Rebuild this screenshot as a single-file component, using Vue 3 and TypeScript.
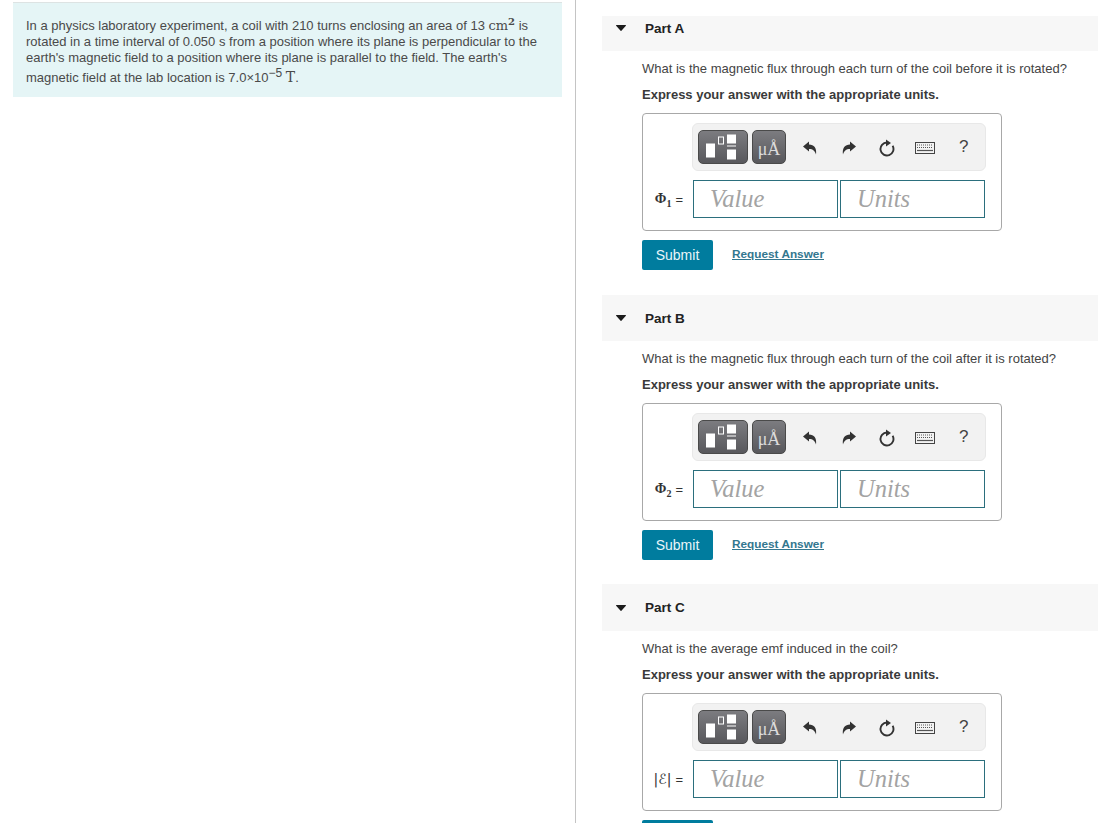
<template>
  <div class="page">
    <aside class="left">
      <div class="intro">
        In a physics laboratory experiment, a coil with 210 turns enclosing an area of 13
        <span class="math">cm<sup>2</sup></span> is rotated in a time interval of 0.050 s from a position where its plane is
        perpendicular to the earth's magnetic field to a position where its plane is parallel to the field. The earth's
        magnetic field at the lab location is 7.0×10<sup class="exp">−5</sup> <span class="math big">T</span>.
      </div>
    </aside>

    <main class="right">
      <section v-for="part in parts" :key="part.name" class="part">
        <header class="part-head">
          <svg class="caret" width="10" height="6" viewBox="0 0 10 6"><path d="M0.500 0h9a.5.5 0 0 1 .4.800L5.400 5.800a.5.5 0 0 1-.8 0L.1.800A.5.5 0 0 1 .5 0z" fill="#1c1c1c" /></svg>
          <span>{{ part.name }}</span>
        </header>
        <div class="part-body">
          <p class="question">{{ part.question }}</p>
          <p class="express">Express your answer with the appropriate units.</p>

          <div class="answer-box">
            <div class="toolbar">
              <button class="tool tool-wide" type="button" aria-label="Templates">
                <svg width="40" height="28" viewBox="0 0 40 28">
                  <rect x="3" y="10.500" width="9" height="14" fill="#fff" />
                  <rect x="15.500" y="4" width="5" height="7" fill="none" stroke="#fff" stroke-width="1" />
                  <rect x="24" y="1.500" width="9" height="9" fill="#fff" />
                  <rect x="24" y="12.500" width="9" height="1" fill="#fff" />
                  <rect x="24" y="16.500" width="9" height="10" fill="#fff" />
                </svg>
              </button>
              <button class="tool tool-unit" type="button">μÅ</button>
              <span class="icon-slot undo">
                <svg width="16" height="16" viewBox="0 0 16 16"><path d="M1 6.500 7 1.500v3c5 0 8 3.500 7 10-1-3.500-3-5.500-7-5.500v2.500z" fill="#333" /></svg>
              </span>
              <span class="icon-slot">
                <svg width="16" height="16" viewBox="0 0 16 16"><path d="M15 6.500 9 1.500v3c-5 0-8 3.500-7 10 1-3.500 3-5.500 7-5.500v2.500z" fill="#333" /></svg>
              </span>
              <span class="icon-slot">
                <svg width="18" height="18" viewBox="0 0 18 18">
                  <path d="M14.600 6.750A6.500 6.500 0 1 1 9 3.500" fill="none" stroke="#333" stroke-width="1.900" />
                  <path d="M8 0.500 13 4 8 7.500z" fill="#333" />
                </svg>
              </span>
              <span class="icon-slot">
                <svg width="20" height="12" viewBox="0 0 20 12">
                  <rect x="0.500" y="0.500" width="19" height="11" fill="#f4f4f4" stroke="#444" />
                  <path d="M2 3h16M2 5.500h16" stroke="#555" stroke-width="1.200" stroke-dasharray="1 1" />
                  <path d="M2 8.500h16" stroke="#555" stroke-width="1.200" />
                </svg>
              </span>
              <span class="icon-slot help">?</span>
            </div>

            <div class="inputs">
              <label class="symbol">
                <b v-if="part.index" class="phi">Φ<sub>{{ part.index }}</sub></b>
                <span v-else class="bars">|<i class="emf">ℰ</i>|</span>
                <span class="eq">=</span>
              </label>
              <input class="field" placeholder="Value" type="text" />
              <input class="field" placeholder="Units" type="text" />
            </div>
          </div>

          <div class="actions">
            <button class="submit" type="button">Submit</button>
            <a class="request" href="#">Request Answer</a>
          </div>
        </div>
      </section>
    </main>
  </div>
</template>

<script setup lang="ts">
interface Part {
  name: string
  question: string
  index: number
}

const parts: Part[] = [
  { name: 'Part A', question: 'What is the magnetic flux through each turn of the coil before it is rotated?', index: 1 },
  { name: 'Part B', question: 'What is the magnetic flux through each turn of the coil after it is rotated?', index: 2 },
  { name: 'Part C', question: 'What is the average emf induced in the coil?', index: 0 }
]
</script>

<style scoped>
.page {
  display: flex;
  height: 823px;
  overflow: hidden;
  font-family: "Liberation Sans", Arial, sans-serif;
  font-size: 13px;
  color: #333;
  background: #fff;
}

.left {
  width: 576px;
  flex: none;
  box-sizing: border-box;
  border-right: 1px solid #c4c4c4;
  padding: 2px 13px 0;
}

.intro {
  width: 549px;
  height: 95px;
  box-sizing: border-box;
  padding: 15px 13px 0;
  background: #e5f5f6;
  border-top: 1px solid #dde3e3;
  line-height: 16px;
  font-size: 13px;
  color: #4a4a4a;
}

.math {
  font-family: "DejaVu Serif", "Liberation Serif", serif;
  font-size: 13px;
}

.math sup {
  font-size: 10px;
  font-weight: bold;
  line-height: 0;
}

.math.big {
  font-size: 14px;
}

.exp {
  font-size: 12px;
  line-height: 14px;
}

.right {
  flex: 1;
  padding: 16px 13px 0 26px;
  min-width: 0;
}

.part {
  margin-bottom: 25px;
}

.part:nth-child(2) {
  margin-bottom: 24px;
}

.part-head {
  display: flex;
  align-items: center;
  gap: 19px;
  height: 46px;
  padding: 11px 0 11px 14px;
  box-sizing: border-box;
  background: #f7f7f7;
  font-weight: bold;
  font-size: 13.500px;
  color: #222;
}

.part:first-child .part-head {
  height: 35px;
  padding-top: 0;
}

.part:last-child .part-head {
  height: 47px;
}

.part-body {
  padding-left: 40px;
}

.question,
.express {
  line-height: 14px;
  font-size: 13px;
  white-space: nowrap;
}

.question {
  margin: 11px 0 12px;
  color: #444;
}

.express {
  margin: 0 0 11px;
  font-weight: bold;
  color: #3a3a3a;
}

.answer-box {
  width: 360px;
  height: 118px;
  box-sizing: border-box;
  border: 1px solid #a8a8a8;
  border-radius: 4px;
  padding: 9px 16px 0 50px;
}

.toolbar {
  display: flex;
  align-items: center;
  height: 48px;
  margin: 0 -1px;
  padding-left: 5px;
  box-sizing: border-box;
  background: #f2f2f2;
  border: 1px solid #e8e8e8;
  border-radius: 6px;
}

.tool {
  height: 34px;
  padding: 0;
  border: 1px solid #4a4a4a;
  border-radius: 5px;
  background: linear-gradient(#7c7c80, #58585c);
  display: flex;
  align-items: center;
  justify-content: center;
}

.tool-wide {
  width: 50px;
  margin-right: 4px;
}

.tool-unit {
  width: 34px;
  font-family: "Liberation Serif", serif;
  font-size: 18px;
  color: #dcdcdc;
  padding-top: 5px;
}

.icon-slot {
  width: 38.400px;
  padding-top: 2px;
  display: flex;
  justify-content: center;
  align-items: center;
}

.undo {
  margin-left: 5px;
}

.help {
  padding-top: 0;
  font-size: 17px;
  color: #444;
}

.inputs {
  display: flex;
  align-items: center;
  gap: 2px;
  margin-top: 9px;
}

.symbol {
  width: 50px;
  margin-left: -50px;
  display: flex;
  justify-content: flex-end;
  align-items: center;
  gap: 4px;
  padding-right: 8px;
  box-sizing: border-box;
  color: #333;
}

.phi {
  font-family: "Liberation Serif", serif;
  font-size: 14px;
}

.phi sub {
  font-size: 10px;
  line-height: 0;
}

.bars {
  font-family: "DejaVu Sans", sans-serif;
  font-size: 14px;
  white-space: nowrap;
}

.emf {
  font-style: normal;
}

.field {
  width: 145px;
  height: 38px;
  box-sizing: border-box;
  margin: 0;
  padding: 0 0 0 16px;
  border: 1px solid #2b6f7d;
  background: #fff;
  font-family: "Liberation Serif", serif;
  font-style: italic;
  font-size: 24.500px;
  color: #999;
  outline: none;
}

.field::placeholder {
  color: #a3a3a3;
  opacity: 1;
}

.actions {
  display: flex;
  align-items: center;
  gap: 19px;
  margin-top: 9px;
}

.submit {
  width: 71px;
  height: 30px;
  padding: 0;
  border: 0;
  border-radius: 2px;
  background: #007c9e;
  color: #e9f6fa;
  font-family: "Liberation Sans", Arial, sans-serif;
  font-size: 14px;
}

.request {
  font-size: 11.800px;
  font-weight: bold;
  color: #33778f;
  text-decoration: underline;
  margin-top: -2px;
}
</style>

<style>
html,
body {
  margin: 0;
  overflow: hidden;
}
</style>
